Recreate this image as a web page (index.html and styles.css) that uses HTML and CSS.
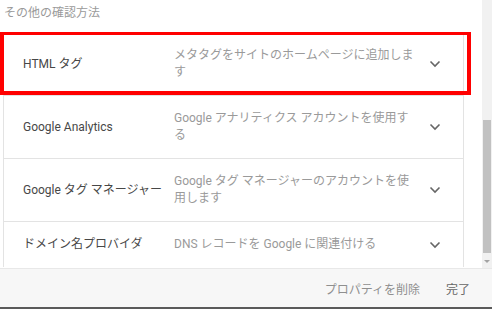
FILE: index.html
```html
<!DOCTYPE html>
<html lang="ja">
<head>
<meta charset="utf-8">
<link rel="stylesheet" href="styles.css">
</head>
<body>
<div class="main">
  <div class="content">
    <div class="heading">その他の確認方法</div>
    <div class="card">
      <div class="row row-first">
        <div class="title">HTML タグ</div>
        <div class="desc">メタタグをサイトのホームページに追加します</div>
        <svg class="chev" width="12" height="8" viewBox="0 0 12 8"><path d="M1.5 1.5 L6 6 L10.5 1.5" fill="none" stroke="#666" stroke-width="1.6"/></svg>
        <div class="highlight"></div>
      </div>
      <div class="row">
        <div class="title">Google Analytics</div>
        <div class="desc">Google アナリティクス アカウントを使用する</div>
        <svg class="chev" width="12" height="8" viewBox="0 0 12 8"><path d="M1.5 1.5 L6 6 L10.5 1.5" fill="none" stroke="#666" stroke-width="1.6"/></svg>
      </div>
      <div class="row">
        <div class="title">Google タグ マネージャー</div>
        <div class="desc">Google タグ マネージャーのアカウントを使用します</div>
        <svg class="chev" width="12" height="8" viewBox="0 0 12 8"><path d="M1.5 1.5 L6 6 L10.5 1.5" fill="none" stroke="#666" stroke-width="1.6"/></svg>
      </div>
      <div class="row">
        <div class="title">ドメイン名プロバイダ</div>
        <div class="desc">DNS レコードを Google に関連付ける</div>
        <svg class="chev" width="12" height="8" viewBox="0 0 12 8"><path d="M1.5 1.5 L6 6 L10.5 1.5" fill="none" stroke="#666" stroke-width="1.6"/></svg>
      </div>
    </div>
  </div>
  <div class="scrollbar">
    <div class="track-top"></div>
    <div class="thumb"></div>
    <div class="arrow"></div>
  </div>
</div>
<div class="footer">
  <span class="btn btn-muted">プロパティを削除</span>
  <span class="btn btn-done">完了</span>
</div>
</body>
</html>
```
FILE: styles.css
```css
* { box-sizing: border-box; }
html, body { margin: 0; padding: 0; background: #fff; }
body {
  width: 492px;
  height: 313px;
  overflow: hidden;
  font-family: Roboto, "Noto Sans CJK JP", sans-serif;
  font-size: 12px;
  display: flex;
  flex-direction: column;
}
.main {
  display: flex;
  height: 268px;
}
.content {
  flex: 1;
  display: flex;
  flex-direction: column;
}
.heading {
  height: 32px;
  padding: 5px 0 0 4px;
  color: #9a9a9a;
  font-size: 12px;
  line-height: 17px;
}
.card {
  margin-left: 3px;
  width: 461px;
  border: 1px solid #e3e3e3;
  border-bottom: none;
  background: #fff;
}
.row {
  display: flex;
  align-items: center;
  padding: 14px 0 14px 19px;
  border-top: 1px solid #e3e3e3;
}
.row:first-child { border-top: none; }
.row-first { position: relative; }
.title {
  width: 151px;
  flex: none;
  color: #474747;
  font-size: 12px;
  line-height: 17px;
}
.desc {
  width: 242px;
  flex: none;
  color: #9a9a9a;
  font-size: 12px;
  line-height: 17px;
}
.chev {
  margin-left: 13px;
  flex: none;
}
.highlight {
  position: absolute;
  left: -4px;
  top: -1px;
  width: 471px;
  height: 63px;
  border: 4px solid #ff0000;
  border-top-width: 3px;
}
.scrollbar {
  width: 10px;
  margin-left: 18px;
  background: #f1f1f1;
  display: flex;
  flex-direction: column;
  align-items: center;
}
.track-top { height: 120px; }
.thumb {
  width: 8px;
  height: 133px;
  background: #c1c1c1;
}
.arrow {
  margin-top: 7px;
  width: 0;
  height: 0;
  border-left: 3px solid transparent;
  border-right: 3px solid transparent;
  border-top: 3px solid #a3a3a3;
}
.footer {
  height: 41px;
  border-top: 1px solid #e8e8e8;
  border-bottom: 2px solid #5a5a5a;
  background: #f7f7f7;
  display: flex;
  align-items: center;
  justify-content: flex-end;
  padding-right: 22px;
  gap: 26px;
  font-size: 12px;
}
.btn-muted { color: #8f8f8f; }
.btn-done { color: #666; }
```
